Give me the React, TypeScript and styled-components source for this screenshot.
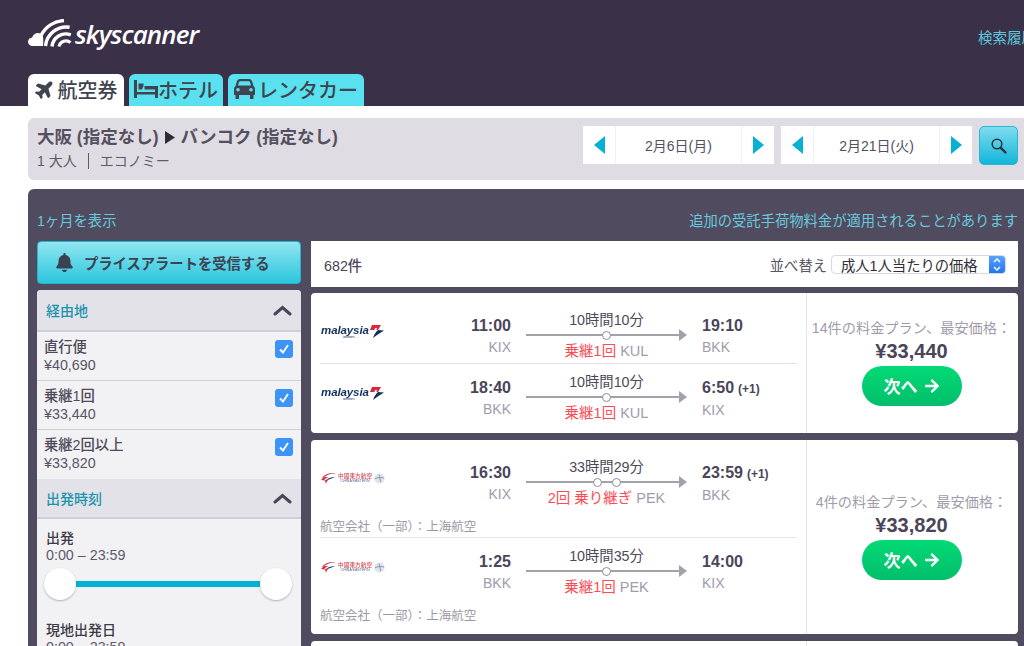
import React from 'react'
import styled, { createGlobalStyle } from 'styled-components'
import { FaArrowRight, FaBell, FaPlane } from 'react-icons/fa'

const GlobalStyle = createGlobalStyle`
  html, body {
    margin: 0;
    padding: 0;
    width: 1024px;
    height: 646px;
    overflow: hidden;
    background: #fff;
    font-family: "Liberation Sans", "Noto Sans CJK JP", sans-serif;
    color: #4a4558;
  }
  * { box-sizing: border-box; }
`

const Page = styled.div`
  width: 1024px;
  height: 646px;
  overflow: hidden;
`

const Header = styled.header`
  height: 106px;
  background: #3a3047;
  padding: 19px 0 0 28px;
  display: flex;
  flex-direction: column;
  position: relative;
`

const LogoRow = styled.div`
  height: 55px;
  display: flex;
  align-items: flex-start;
  gap: 3px;
`

const Wordmark = styled.span`
  font-family: "Open Sans", "Liberation Sans", sans-serif;
  font-size: 26px;
  font-weight: 600;
  font-style: italic;
  letter-spacing: -0.9px;
  line-height: 30px;
  color: #fff;
`

const History = styled.a`
  position: absolute;
  left: 978px;
  top: 29px;
  font-size: 14.5px;
  line-height: 18px;
  color: #5cc8dc;
  white-space: nowrap;
`

const Tabs = styled.nav`
  display: flex;
  gap: 5px;
  height: 32px;
`

const Tab = styled.div<{ $active?: boolean; $width: number; $gap: number }>`
  width: ${p => p.$width}px;
  padding-bottom: 2px;
  background: ${p => (p.$active ? '#fff' : '#59e1ef')};
  border-radius: 6px 6px 0 0;
  display: flex;
  align-items: center;
  justify-content: center;
  gap: ${p => p.$gap}px;
  font-size: 20px;
  font-weight: 500;
  color: #3f4450;
  white-space: nowrap;
  svg { flex: none; }
`

const SearchBar = styled.section`
  margin: 12px 0 0 28px;
  height: 62px;
  background: #dfdde3;
  border-radius: 6px 0 0 6px;
  padding: 8px 6px 0 9px;
  display: flex;
  justify-content: space-between;
`

const Route = styled.div`
  display: flex;
  flex-direction: column;
`

const RouteTitle = styled.div`
  font-size: 17.5px;
  font-weight: 700;
  line-height: 22px;
  color: #55505f;
  display: flex;
  align-items: center;
  gap: 6px;
`

const RouteMeta = styled.div`
  margin-top: 4px;
  font-size: 14px;
  line-height: 18px;
  color: #5f5a69;
  display: flex;
  align-items: center;
  gap: 11px;
`

const MetaDivider = styled.span`
  width: 1px;
  height: 16px;
  background: #5f5a69;
`

const DateControls = styled.div`
  display: flex;
  gap: 7px;
`

const DateBox = styled.div`
  width: 191px;
  height: 38px;
  background: #fff;
  display: grid;
  grid-template-columns: 33px 1fr 33px;
`

const DateArrow = styled.div<{ $dir: 'left' | 'right' }>`
  display: flex;
  align-items: center;
  justify-content: center;
  border-${p => (p.$dir === 'left' ? 'right' : 'left')}: 1px solid #f0eff3;
  &::before {
    content: '';
    border-style: solid;
    border-width: 9px 0 9px 11px;
    border-color: transparent transparent transparent #06b1d4;
    transform: ${p => (p.$dir === 'left' ? 'rotate(180deg)' : 'none')};
  }
`

const DateLabel = styled.div`
  display: flex;
  align-items: center;
  justify-content: center;
  font-size: 14px;
  color: #55505f;
`

const SearchButton = styled.button`
  width: 39px;
  height: 39px;
  border: 1px solid #2cb6d6;
  border-radius: 5px;
  padding: 0;
  background: linear-gradient(#7fdcef, #12b6d9);
  display: flex;
  align-items: center;
  justify-content: center;
`

const Panel = styled.main`
  margin: 9px 0 0 28px;
  height: 460px;
  background: #514b5f;
  border-radius: 6px 0 0 0;
  padding: 24px 6px 0 9px;
`

const PanelLinks = styled.div`
  display: flex;
  justify-content: space-between;
  height: 28px;
  font-size: 14.3px;
  line-height: 16px;
  color: #68c9dd;
`

const Columns = styled.div`
  display: flex;
  gap: 10px;
  align-items: flex-start;
`

const Sidebar = styled.aside`
  width: 264px;
  flex: none;
`

const AlertButton = styled.button`
  width: 100%;
  height: 43px;
  border: 1px solid #25b4cd;
  border-radius: 4px;
  background: linear-gradient(#90e6f1, #2cc6dd);
  display: flex;
  align-items: center;
  gap: 10px;
  padding: 0 0 0 17px;
  font: 700 14.3px "Liberation Sans", "Noto Sans CJK JP", sans-serif;
  color: #3c4350;
`

const FilterCard = styled.div`
  margin-top: 6px;
  background: #f2f2f5;
  border-radius: 4px 4px 0 0;
  overflow: hidden;
`

const FilterHead = styled.div<{ $first?: boolean }>`
  height: ${p => (p.$first ? 42 : 40)}px;
  background: #e3e2e8;
  border-bottom: 2px solid #d0ced7;
  padding: 0 9px;
  display: flex;
  align-items: center;
  justify-content: space-between;
  font-size: 14px;
  font-weight: 500;
  color: #1b93ad;
`

const StopRow = styled.label<{ $last?: boolean }>`
  height: 49px;
  padding: 6px 8px 0 7px;
  display: flex;
  justify-content: space-between;
  border-bottom: ${p => (p.$last ? 'none' : '1px solid #d0ced7')};
`

const StopText = styled.div`
  font-size: 14.3px;
  line-height: 18px;
  color: #5a5565;
  strong { display: block; font-weight: 500; color: #4e4957; }
`

const CheckBox = styled.span`
  width: 18px;
  height: 18px;
  margin-top: 2px;
  border-radius: 3px;
  background: #3c94f6;
  display: flex;
  align-items: center;
  justify-content: center;
`

const TimeFilter = styled.div`
  padding: 10px 9px 0 7px;
  height: 129px;
`

const TimeLabel = styled.div`
  padding-left: 2px;
  font-size: 14px;
  font-weight: 500;
  line-height: 18px;
  color: #3d3a45;
`

const TimeValue = styled.div`
  padding-left: 2px;
  font-size: 14.3px;
  line-height: 16px;
  color: #5f5a69;
`

const Slider = styled.div`
  position: relative;
  margin: 4px 0 20px;
  height: 34px;
  display: flex;
  align-items: center;
  padding: 0 16px;
`

const SliderTrack = styled.div`
  height: 6px;
  flex: 1;
  background: #06b1d4;
`

const SliderHandle = styled.span<{ $side: 'left' | 'right' }>`
  position: absolute;
  top: 1px;
  ${p => p.$side}: 0;
  width: 32px;
  height: 32px;
  border-radius: 50%;
  background: #fff;
  box-shadow: 0 1px 2px rgba(60, 55, 75, 0.35);
`

const Results = styled.div`
  flex: 1;
  display: flex;
  flex-direction: column;
  gap: 7px;
`

const SortBar = styled.div`
  height: 46px;
  margin-bottom: -1px;
  background: #fff;
  padding: 0 12px 0 13px;
  display: flex;
  align-items: center;
  justify-content: space-between;
  font-size: 14.3px;
  color: #4a4558;
  strong { font-weight: 500; }
`

const SortControl = styled.div`
  display: flex;
  align-items: center;
  gap: 4px;
  color: #5a5565;
`

const SelectBox = styled.div`
  width: 175px;
  height: 19px;
  border-radius: 4px;
  background: #fff;
  border: 1px solid #d9d8dd;
  display: flex;
  align-items: center;
  justify-content: space-between;
  padding-left: 9px;
  font-size: 14.3px;
  color: #2f2d36;
  overflow: hidden;
`

const SelectStepper = styled.span`
  width: 16px;
  height: 19px;
  background: linear-gradient(#5aa6fb, #1f74ee);
  display: flex;
  align-items: center;
  justify-content: center;
`

const Card = styled.article`
  background: #fff;
  border-radius: 4px;
  display: flex;
`

const Legs = styled.div`
  width: 496px;
  flex: none;
  padding: 9px;
  border-right: 1px solid #e4e3e9;
  & > * + * { border-top: 1px solid #e4e3e9; }
`

const Leg = styled.div<{ $tall?: boolean }>`
  height: ${p => (p.$tall ? 88 : 61)}px;
  padding-top: 14px;
  position: relative;
  display: grid;
  grid-template-columns: 191px 161px auto;
  column-gap: 15px;
  align-items: start;
`

const LogoCell = styled.div`
  position: absolute;
  left: 1px;
  top: 22px;
`

const TimeBlock = styled.div<{ $align: 'left' | 'right' }>`
  text-align: ${p => p.$align};
  grid-column: ${p => (p.$align === 'right' ? 1 : 3)};
  grid-row: 1;
  white-space: nowrap;
`

const Clock = styled.div`
  font-size: 16px;
  font-weight: 700;
  line-height: 20px;
  color: #4a4558;
  small { font-size: 12px; margin-left: 4px; }
`

const Airport = styled.div`
  margin-top: 1px;
  font-size: 14px;
  line-height: 20px;
  color: #a09cab;
`

const RouteLine = styled.div`
  grid-column: 2;
  grid-row: 1;
  margin-top: -4px;
  text-align: center;
  white-space: nowrap;
`

const Duration = styled.div`
  font-size: 14.3px;
  line-height: 16px;
  color: #4e4957;
`

const Track = styled.div`
  position: relative;
  height: 14px;
  display: flex;
  align-items: center;
  justify-content: center;
  gap: 10px;
  &::before {
    content: '';
    position: absolute;
    left: 0;
    right: 6px;
    top: 6px;
    height: 2px;
    background: #a3a1aa;
  }
  &::after {
    content: '';
    position: absolute;
    right: 0;
    top: 1px;
    border-style: solid;
    border-width: 6px 0 6px 8px;
    border-color: transparent transparent transparent #a3a1aa;
  }
`

const StopDot = styled.span`
  position: relative;
  z-index: 1;
  width: 9px;
  height: 9px;
  border-radius: 50%;
  background: #fff;
  border: 1.5px solid #8f8d97;
`

const Stops = styled.div`
  font-size: 14.5px;
  line-height: 18px;
  color: #a09cab;
  em { font-style: normal; color: #fb4d55; margin-right: 4px; }
`

const Operator = styled.div`
  position: absolute;
  left: 0;
  bottom: 2px;
  font-size: 12.5px;
  line-height: 16px;
  color: #9b98a3;
  ${Leg}:last-child & { bottom: 1px; }
`

const PriceCol = styled.div`
  flex: 1;
  display: flex;
  flex-direction: column;
  align-items: center;
  justify-content: center;
  padding: 0 2px 2px 0;
`

const PriceNote = styled.div`
  font-size: 14.2px;
  line-height: 18px;
  color: #a09cab;
  white-space: nowrap;
`

const Price = styled.div`
  font-size: 20px;
  font-weight: 700;
  line-height: 24px;
  color: #4a4558;
  margin-top: 2px;
`

const NextButton = styled.button`
  width: 100px;
  height: 40px;
  margin-top: 3px;
  border: 0;
  border-radius: 20px;
  background: linear-gradient(#03da76, #02be6b);
  color: #fff;
  display: flex;
  align-items: center;
  justify-content: center;
  gap: 6px;
  font: 700 17px "Liberation Sans", "Noto Sans CJK JP", sans-serif;
`

const AirlineMark = styled.div`
  display: flex;
  align-items: center;
  filter: blur(0.25px);
`

const MalaysiaText = styled.div`
  font-family: "Liberation Sans", sans-serif;
  font-size: 11.5px;
  font-weight: 700;
  font-style: italic;
  line-height: 10px;
  letter-spacing: -0.1px;
  color: #14305f;
  text-align: right;
  small { display: block; font-size: 4px; line-height: 4px; font-weight: 400; margin-right: 14px; }
`

const EasternText = styled.div`
  margin-left: 2px;
  line-height: 5px;
  text-align: center;
  b { display: block; font-size: 5.6px; font-weight: 500; color: #d34650; letter-spacing: 0.1px; }
  span { display: block; font: 3.6px "Liberation Sans", sans-serif; color: #53648a; }
`

const SkyscannerMark = () => (
  <svg width="44" height="29" viewBox="0 0 44 29">
    <path d="M4.5 27C2 27 0 25.2 0 22.8C0 20.4 1.8 18.6 4.2 18.4C5 15.6 7.5 14 10 14C12 14 13.5 14.8 14.5 16C15.5 19.5 15.5 23 15 27Z" fill="#fff" />
    <g fill="none" stroke="#fff">
      <path d="M31 27.5A7 7 0 0 1 42.5 23.6" strokeWidth="3.2" />
      <path d="M24 27.5A14 14 0 0 1 42.8 15.8" strokeWidth="3.4" />
      <path d="M17.5 27A21 21 0 0 1 41.6 8.3" strokeWidth="3.4" />
      <path d="M13 16.4A28 28 0 0 1 36 1.5" strokeWidth="3.4" />
    </g>
  </svg>
)

const BedIcon = () => (
  <svg width="24" height="18" viewBox="0 0 24 18" fill="#3f4450">
    <path d="M0 0H3V18H0Z" />
    <path d="M3 12H21V14.5H3Z" />
    <path d="M21 6H24V18H21Z" />
    <path d="M4.5 3.5H9.5V6L8 9.5H4.5Z" />
    <path d="M10.5 6H24V9.5H10.5Z" />
  </svg>
)

const CarIcon = () => (
  <svg width="21" height="20" viewBox="0 0 21 20" fill="#3f4450">
    <path
      fillRule="evenodd"
      d="M6 0H15C16.5 0 17.5 .8 18 2L19.5 7C20.5 7.8 21 9 21 10V15C21 15.6 20.6 16 20 16H1C.4 16 0 15.6 0 15V10C0 9 .5 7.8 1.5 7L3 2C3.5 .8 4.5 0 6 0ZM6 2.2C5.5 2.2 5.2 2.5 5 3L4 6.5H17L16 3C15.8 2.5 15.5 2.2 15 2.2ZM4 9A1.8 1.8 0 1 0 4 12.6A1.8 1.8 0 1 0 4 9ZM17 9A1.8 1.8 0 1 0 17 12.6A1.8 1.8 0 1 0 17 9Z"
    />
    <path d="M1.5 16H5V20H1.5ZM16 16H19.5V20H16Z" />
  </svg>
)

const SearchGlyph = () => (
  <svg width="18" height="18" viewBox="0 0 18 18" fill="none" stroke="#25313d">
    <circle cx="7" cy="7" r="4.8" strokeWidth="1.5" />
    <path d="M10.8 10.8L15.5 15.5" strokeWidth="2.4" strokeLinecap="round" />
  </svg>
)

const ChevronUp = () => (
  <svg width="19" height="11" viewBox="0 0 19 11" fill="none" stroke="#4a4558" strokeWidth="3" strokeLinecap="round">
    <path d="M2 9L9.5 2.5L17 9" />
  </svg>
)

const MalaysiaLogo = () => (
  <AirlineMark>
    <MalaysiaText>
      malaysia
      <small>airlines</small>
    </MalaysiaText>
    <svg width="15" height="15" viewBox="0 0 15 15">
      <path d="M3 1H12L9 6H1Z" fill="#d8283c" />
      <path d="M9 6L15 6.5L8 11L4 14L6 9Z" fill="#14305f" />
      <path d="M6 4H8L6 10H4.5Z" fill="#fff" />
    </svg>
  </AirlineMark>
)

const EasternLogo = () => (
  <AirlineMark>
    <svg width="15" height="14" viewBox="0 0 16 14">
      <path d="M16 2C10 1 4 3 1 7C4 6 6 6 8 6C6 7 4 8 3 10C5 9 7 8 9 8C7 9 6 11 5 14C6 10 3 9 0 9C4 5 9 2 16 2Z" fill="#d4303a" />
      <path d="M15 6C11 6 8 7 6 9L10 8Z" fill="#1f3f8c" />
    </svg>
    <EasternText>
      <b>中國東方航空</b>
      <span>CHINA EASTERN</span>
    </EasternText>
    <svg width="11" height="11" viewBox="0 0 13 13" style={{ marginLeft: 2 }}>
      <circle cx="6.5" cy="6.5" r="6" fill="#dfe3ea" />
      <path d="M1 7C4 5 9 5 12 6M6 2L8 11" stroke="#7d8ba3" strokeWidth="1" fill="none" />
    </svg>
  </AirlineMark>
)

const Check = () => (
  <svg width="12" height="12" viewBox="0 0 12 12">
    <path d="M2 6.5L5 9.5L10 2" fill="none" stroke="#fff" strokeWidth="1.8" />
  </svg>
)

const SORT_CHEVRONS = 'M3 5L6 2L9 5M3 10L6 13L9 10'

interface LegData {
  logo: React.ReactNode
  depart: string
  from: string
  duration: string
  dots: number
  stops: string
  via: string
  arrive: string
  nextDay?: boolean
  to: string
  operator?: string
}

const FlightLeg: React.FC<{ value: LegData }> = ({ value }) => (
  <Leg $tall={!!value.operator}>
    <LogoCell>{value.logo}</LogoCell>
    <TimeBlock $align="right">
      <Clock>{value.depart}</Clock>
      <Airport>{value.from}</Airport>
    </TimeBlock>
    <RouteLine>
      <Duration>{value.duration}</Duration>
      <Track>
        {Array.from({ length: value.dots }).map((_, i) => (
          <StopDot key={i} />
        ))}
      </Track>
      <Stops>
        <em>{value.stops}</em>
        {value.via}
      </Stops>
    </RouteLine>
    <TimeBlock $align="left">
      <Clock>
        {value.arrive}
        {value.nextDay && <small>(+1)</small>}
      </Clock>
      <Airport>{value.to}</Airport>
    </TimeBlock>
    {value.operator && <Operator>{value.operator}</Operator>}
  </Leg>
)

const FlightCard: React.FC<{ legs: LegData[]; note: string; price: string }> = ({ legs, note, price }) => (
  <Card>
    <Legs>
      {legs.map(leg => (
        <FlightLeg key={leg.depart} value={leg} />
      ))}
    </Legs>
    <PriceCol>
      <PriceNote>{note}</PriceNote>
      <Price>{price}</Price>
      <NextButton>
        次へ <FaArrowRight size={16} />
      </NextButton>
    </PriceCol>
  </Card>
)

const OPERATOR = '航空会社（一部）：上海航空'

const malaysiaLegs: LegData[] = [
  { logo: <MalaysiaLogo />, depart: '11:00', from: 'KIX', duration: '10時間10分', dots: 1, stops: '乗継1回', via: 'KUL', arrive: '19:10', to: 'BKK' },
  { logo: <MalaysiaLogo />, depart: '18:40', from: 'BKK', duration: '10時間10分', dots: 1, stops: '乗継1回', via: 'KUL', arrive: '6:50', nextDay: true, to: 'KIX' },
]

const easternLegs: LegData[] = [
  { logo: <EasternLogo />, depart: '16:30', from: 'KIX', duration: '33時間29分', dots: 2, stops: '2回 乗り継ぎ', via: 'PEK', arrive: '23:59', nextDay: true, to: 'BKK', operator: OPERATOR },
  { logo: <EasternLogo />, depart: '1:25', from: 'BKK', duration: '10時間35分', dots: 1, stops: '乗継1回', via: 'PEK', arrive: '14:00', to: 'KIX', operator: OPERATOR },
]

const stopFilters = [
  { label: '直行便', price: '¥40,690' },
  { label: '乗継1回', price: '¥33,440' },
  { label: '乗継2回以上', price: '¥33,820' },
]

const App: React.FC = () => (
  <Page>
    <GlobalStyle />
    <Header>
      <LogoRow>
        <SkyscannerMark />
        <Wordmark>skyscanner</Wordmark>
      </LogoRow>
      <History>検索履歴</History>
      <Tabs>
        <Tab $active $width={96} $gap={3}>
          <FaPlane size={20} style={{ transform: 'rotate(-45deg)' }} />
          航空券
        </Tab>
        <Tab $width={94} $gap={0}>
          <BedIcon />
          ホテル
        </Tab>
        <Tab $width={136} $gap={3}>
          <CarIcon />
          レンタカー
        </Tab>
      </Tabs>
    </Header>

    <SearchBar>
      <Route>
        <RouteTitle>
          大阪 (指定なし)
          <svg width="10" height="13" viewBox="0 0 10 13">
            <path d="M0 0L10 6.5L0 13Z" fill="#2f2c38" />
          </svg>
          バンコク (指定なし)
        </RouteTitle>
        <RouteMeta>
          1 大人
          <MetaDivider />
          エコノミー
        </RouteMeta>
      </Route>
      <DateControls>
        <DateBox>
          <DateArrow $dir="left" />
          <DateLabel>2月6日(月)</DateLabel>
          <DateArrow $dir="right" />
        </DateBox>
        <DateBox>
          <DateArrow $dir="left" />
          <DateLabel>2月21日(火)</DateLabel>
          <DateArrow $dir="right" />
        </DateBox>
        <SearchButton aria-label="検索">
          <SearchGlyph />
        </SearchButton>
      </DateControls>
    </SearchBar>

    <Panel>
      <PanelLinks>
        <span>1ヶ月を表示</span>
        <span>追加の受託手荷物料金が適用されることがあります</span>
      </PanelLinks>
      <Columns>
        <Sidebar>
          <AlertButton>
            <FaBell size={19} />
            プライスアラートを受信する
          </AlertButton>
          <FilterCard>
            <FilterHead $first>
              経由地
              <ChevronUp />
            </FilterHead>
            {stopFilters.map((item, i) => (
              <StopRow key={item.label} $last={i === stopFilters.length - 1}>
                <StopText>
                  <strong>{item.label}</strong>
                  {item.price}
                </StopText>
                <CheckBox>
                  <Check />
                </CheckBox>
              </StopRow>
            ))}
            <FilterHead>
              出発時刻
              <ChevronUp />
            </FilterHead>
            <TimeFilter>
              <TimeLabel>出発</TimeLabel>
              <TimeValue>0:00 – 23:59</TimeValue>
              <Slider>
                <SliderHandle $side="left" />
                <SliderTrack />
                <SliderHandle $side="right" />
              </Slider>
              <TimeLabel>現地出発日</TimeLabel>
              <TimeValue>0:00 – 23:59</TimeValue>
            </TimeFilter>
          </FilterCard>
        </Sidebar>
        <Results>
          <SortBar>
            <strong>682件</strong>
            <SortControl>
              並べ替え
              <SelectBox>
                成人1人当たりの価格
                <SelectStepper>
                  <svg width="12" height="15" viewBox="0 0 12 15">
                    <path d={SORT_CHEVRONS} fill="none" stroke="#fff" strokeWidth="1.4" />
                  </svg>
                </SelectStepper>
              </SelectBox>
            </SortControl>
          </SortBar>
          <FlightCard legs={malaysiaLegs} note="14件の料金プラン、最安価格：" price="¥33,440" />
          <FlightCard legs={easternLegs} note="4件の料金プラン、最安価格：" price="¥33,820" />
          <Card>
            <Legs />
            <PriceCol />
          </Card>
        </Results>
      </Columns>
    </Panel>
  </Page>
)

export default App
